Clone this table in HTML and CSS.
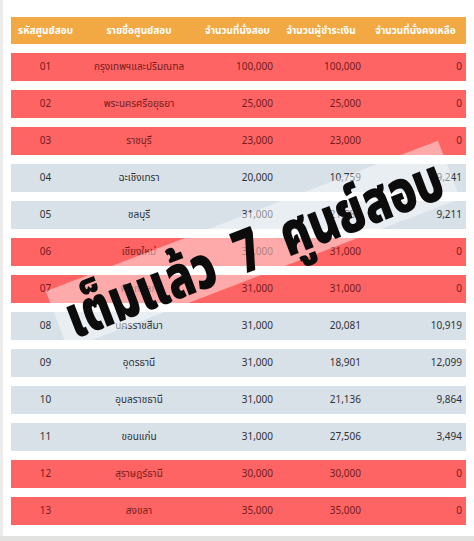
FILE: index.html
```html
<!DOCTYPE html>
<html lang="th">
<head>
<meta charset="utf-8">
<link rel="stylesheet" href="styles.css">
</head>
<body>
<div class="page">
  <table class="centers">
    <thead>
      <tr>
        <th>รหัสศูนย์สอบ</th>
        <th>รายชื่อศูนย์สอบ</th>
        <th>จำนวนที่นั่งสอบ</th>
        <th>จำนวนผู้ชำระเงิน</th>
        <th>จำนวนที่นั่งคงเหลือ</th>
      </tr>
    </thead>
    <tbody>
      <tr class="full"><td>01</td><td>กรุงเทพฯและปริมณฑล</td><td>100,000</td><td>100,000</td><td>0</td></tr>
      <tr class="full"><td>02</td><td>พระนครศรีอยุธยา</td><td>25,000</td><td>25,000</td><td>0</td></tr>
      <tr class="full"><td>03</td><td>ราชบุรี</td><td>23,000</td><td>23,000</td><td>0</td></tr>
      <tr class="open"><td>04</td><td>ฉะเชิงเทรา</td><td>20,000</td><td>10,759</td><td>9,241</td></tr>
      <tr class="open"><td>05</td><td>ชลบุรี</td><td>31,000</td><td>21,789</td><td>9,211</td></tr>
      <tr class="full"><td>06</td><td>เชียงใหม่</td><td>31,000</td><td>31,000</td><td>0</td></tr>
      <tr class="full"><td>07</td><td>พิษณุโลก</td><td>31,000</td><td>31,000</td><td>0</td></tr>
      <tr class="open"><td>08</td><td>นครราชสีมา</td><td>31,000</td><td>20,081</td><td>10,919</td></tr>
      <tr class="open"><td>09</td><td>อุดรธานี</td><td>31,000</td><td>18,901</td><td>12,099</td></tr>
      <tr class="open"><td>10</td><td>อุบลราชธานี</td><td>31,000</td><td>21,136</td><td>9,864</td></tr>
      <tr class="open"><td>11</td><td>ขอนแก่น</td><td>31,000</td><td>27,506</td><td>3,494</td></tr>
      <tr class="full"><td>12</td><td>สุราษฎร์ธานี</td><td>30,000</td><td>30,000</td><td>0</td></tr>
      <tr class="full"><td>13</td><td>สงขลา</td><td>35,000</td><td>35,000</td><td>0</td></tr>
    </tbody>
  </table>
  <div class="stamp"><span class="stamp-text">เต็มแล้ว&nbsp;&nbsp;7&nbsp;&nbsp;ศูนย์สอบ</span></div>
</div>
</body>
</html>
```
FILE: styles.css
```css
html, body {
  margin: 0;
  padding: 0;
}
body {
  background: #e2e2e0;
  font-family: "Noto Sans Thai", "Noto Sans", "DejaVu Sans", sans-serif;
}
.page {
  position: relative;
  height: 536px;
  background: #ffffff;
  border-left: 3px solid #ebebeb;
  box-sizing: border-box;
  padding: 8px 8px 0 8px;
}
.centers {
  width: 455px;
  border-collapse: separate;
  border-spacing: 0 9px;
  table-layout: fixed;
  font-size: 10px;
}
.centers th, .centers td {
  box-sizing: border-box;
}
.centers th:nth-child(1), .centers td:nth-child(1) { width: 69px; }
.centers th:nth-child(2), .centers td:nth-child(2) { width: 118px; }
.centers th:nth-child(3), .centers td:nth-child(3) { width: 79px; }
.centers th:nth-child(4), .centers td:nth-child(4) { width: 88px; }
.centers th:nth-child(5), .centers td:nth-child(5) { width: 101px; }
.centers th {
  background: #f3a943;
  color: #ffffff;
  font-weight: 700;
  height: 27px;
  padding: 0 2px;
  text-align: center;
  white-space: nowrap;
}
.centers td {
  height: 28px;
  padding: 0 4px;
  white-space: nowrap;
}
.centers td:nth-child(1), .centers td:nth-child(2) { text-align: center; }
.centers td:nth-child(3), .centers td:nth-child(4), .centers td:nth-child(5) { text-align: right; }
.full td {
  background: #fe6464;
  color: #741c1c;
}
.open td {
  background: #d8e0e8;
  color: #2f3236;
}
.stamp {
  position: absolute;
  left: 40px;
  top: 214px;
  width: 420px;
  height: 62px;
  background: rgba(255, 255, 255, 0.45);
  transform: rotate(-21deg);
  display: flex;
  align-items: center;
  justify-content: center;
}
.stamp-text {
  font-size: 60px;
  font-weight: 900;
  color: #0c0c0c;
  white-space: nowrap;
  line-height: 1;
  transform: scaleX(0.74) translateY(6px);
}
```
